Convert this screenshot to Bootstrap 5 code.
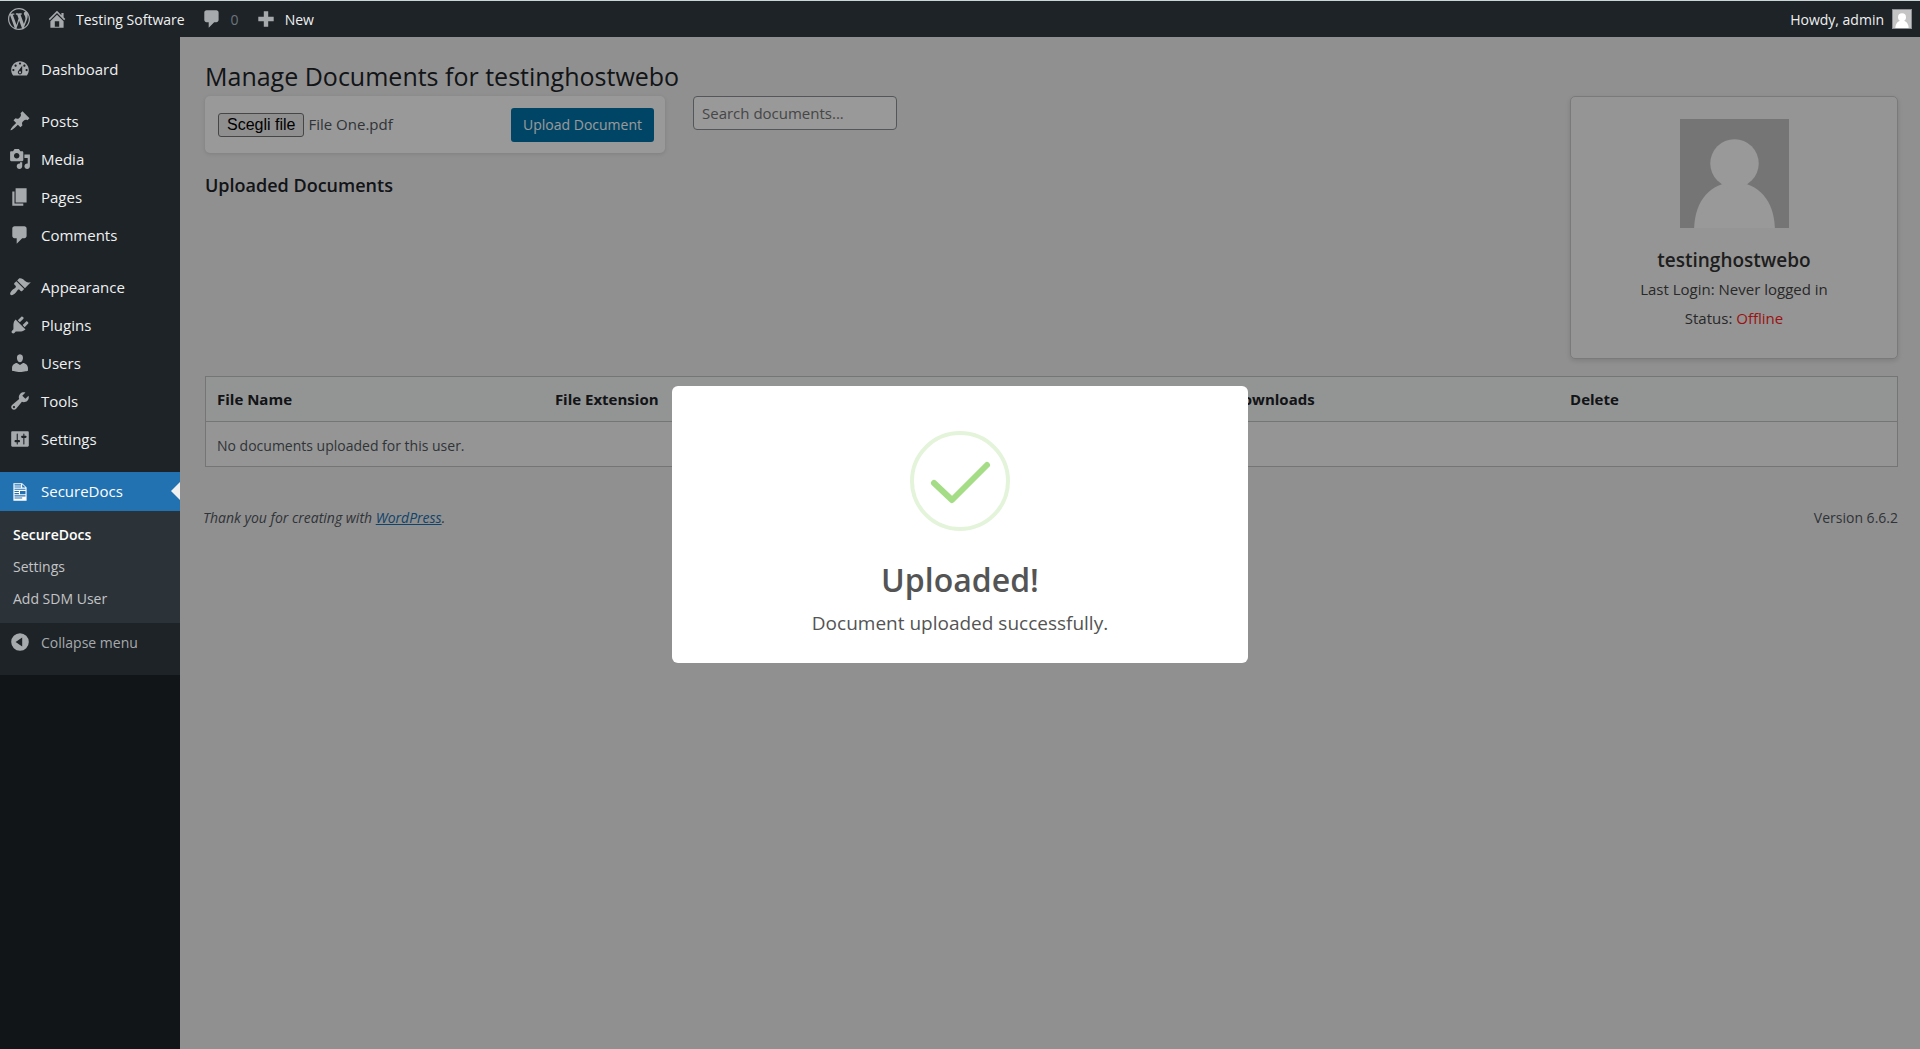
<!DOCTYPE html>
<html lang="en">
<head>
<meta charset="utf-8">
<meta name="viewport" content="width=device-width, initial-scale=1">
<title>SecureDocs</title>
<link href="https://cdn.jsdelivr.net/npm/bootstrap@5.3.0/dist/css/bootstrap.min.css" rel="stylesheet">
<style>
  body { font-family: "Open Sans", "Noto Sans", sans-serif; font-size: 14px; background: #f0f0f1; color: #50575e; }
  a { text-decoration: none; }
  .ico { width: 22px; height: 22px; fill: currentColor; flex: none; }
  .adminbar { position: relative; z-index: 30; height: 37px; background: #1d2327; border-top: 1px solid #c9d6d5; color: #a7aaad; padding: 0 8px; }
  .adminbar a { color: #f0f0f1; }
  .adminbar .ico { color: #a7aaad; }
  .face-sm { width: 20px; height: 20px; border: 1px solid #8c8f94; }
  .side { width: 180px; background: #1d2327; flex: none; }
  .side-menu { position: relative; z-index: 30; background: #1d2327; padding: 13px 0 14px; }
  .side-menu a, .side-menu button { height: 38px; padding: 0 9px; gap: 10px; color: #f0f0f1; font-size: 15px; display: flex; align-items: center; width: 100%; border: 0; background: none; }
  .side-menu .ico { color: #a7aaad; }
  .side-menu .gap-top { margin-top: 14px; }
  .side-menu a.current { position: relative; height: 39px; background: #2271b1; color: #fff; }
  .side-menu a.current .ico { color: #fff; }
  .side-menu a.current::after { content: ""; position: absolute; right: 0; top: 10px; border: 9px solid transparent; border-left: 0; border-right-color: #f0f0f1; }
  .side-menu .submenu { background: #2c3338; padding: 7px 0 9px; }
  .side-menu .submenu a { height: 32px; padding: 0 13px; font-size: 14px; color: #c3c4c7; }
  .side-menu .submenu a.chosen { color: #fff; font-weight: 600; }
  .side-menu button { color: #a7aaad; font-size: 14px; }
  .work { padding: 22px 22px 0 25px; min-width: 0; }
  h1 { font-size: 25px; line-height: 34px; color: #1d2327; margin: 0 0 3px; }
  h2 { font-size: 18px; line-height: 24px; color: #1d2327; margin: 20px 0 0; font-weight: 600; }
  .form-col { width: 460px; margin-right: 28px; }
  .upload-box { height: 57px; padding: 0 11px 0 13px; background: #fff; border-radius: 5px; box-shadow: 0 1px 4px rgba(0,0,0,.12); font-size: 15px; }
  .pick { font: 16px/22px "Liberation Sans", sans-serif; border: 1px solid #767676; border-radius: 3px; background: #efefef; color: #000; padding: 0 8px; }
  .send { background: #0073aa; color: #fff; border: 0; border-radius: 3px; font-size: 14px; height: 34px; padding: 0 12px; }
  .find { width: 204px; height: 34px; border: 1px solid #8c8f94; border-radius: 4px; font-size: 15px; padding: 0 8px; background: #fff; }
  .find::placeholder { color: #757575; opacity: 1; }
  .profile { width: 328px; height: 263px; padding-top: 22px; background: #f9f9f9; border: 1px solid #ccc; border-radius: 5px; box-shadow: 0 2px 5px rgba(0,0,0,.12); color: #444; font-size: 15px; line-height: 29px; }
  .face-lg { width: 109px; height: 109px; display: block; margin: 0 auto 17px; }
  .profile h3 { font-size: 19px; line-height: 30px; margin: 0; font-weight: 600; color: #333; }
  .off { color: #f22; }
  .docs { table-layout: fixed; margin: 17px 0 0; border: 1px solid #c3c4c7; }
  .docs th, .docs td { height: 45px; padding: 0 11px; vertical-align: middle; background: #f6f7f7; border-color: #c3c4c7; }
  .docs th { font-size: 15px; color: #1d2327; font-weight: 700; }
  .docs td { background: #f9f9f9; font-size: 14px; color: #50575e; padding-top: 2px; }
  .foot { margin-top: 40px; line-height: 22px; font-size: 14px; margin-left: -2px; }
  .foot a { color: #2271b1; text-decoration: underline; }
  .shade { position: fixed; inset: 0; z-index: 20; background: rgba(0,0,0,.4); }
  .popup { width: 576px; padding: 45px 0 24px; background: #fff; border-radius: 6px; color: #545454; }
  .tick { width: 100px; height: 100px; }
  .popup h2 { font-size: 32px; line-height: 44px; margin: 27px 0 5px; color: #545454; }
  .popup p { font-size: 19px; line-height: 32px; margin: 0; }
</style>
</head>
<body>
<svg class="d-none">
  <symbol id="face" viewBox="0 0 108 108"><path fill="#c4c4c4" d="M0 0h108v108H0z"/><circle cx="54" cy="44" r="24" fill="#fff"/><path fill="#fff" d="M14 108c1-27 16-45 40-45s39 18 40 45z"/></symbol>
  <symbol id="bubble" viewBox="0 0 20 20"><path d="M5 2h9c1.100 0 2 .9 2 2v7c0 1.100-.9 2-2 2h-2l-5 5v-5H5c-1.100 0-2-.9-2-2V4c0-1.100.9-2 2-2z"/></symbol>
</svg>
<div class="d-flex flex-column min-vh-100">
  <header class="adminbar d-flex align-items-center">
    <a href="#" aria-label="About WordPress" class="d-flex me-3"><svg class="ico" viewBox="0 0 20 20"><path d="M20 10c0-5.510-4.490-10-10-10C4.480 0 0 4.490 0 10c0 5.520 4.480 10 10 10 5.510 0 10-4.480 10-10zM7.780 15.370L4.370 6.220c.55-.02 1.170-.08 1.170-.08.5-.06.44-1.130-.06-1.110 0 0-1.450.11-2.370.11-.18 0-.37 0-.58-.01C4.120 2.690 6.870 1.110 10 1.110c2.330 0 4.450.87 6.050 2.340-.68-.11-1.650.39-1.650 1.580 0 .74.45 1.360.9 2.100.35.61.55 1.360.55 2.460 0 1.490-1.400 5-1.400 5l-3.030-8.370c.54-.02.82-.17.82-.17.5-.05.44-1.250-.06-1.220 0 0-1.440.12-2.380.12-.87 0-2.330-.12-2.330-.12-.5-.03-.56 1.200-.06 1.220l.92.08 1.260 3.410zM17.410 10c.24-.64.74-1.870.43-4.250.7 1.290 1.050 2.710 1.050 4.250 0 3.290-1.730 6.240-4.400 7.780.97-2.590 1.940-5.200 2.920-7.780zM6.100 18.090C3.120 16.650 1.110 13.530 1.110 10c0-1.300.23-2.480.72-3.590C3.250 10.300 4.670 14.200 6.100 18.090zm4.030-6.630l2.580 6.980c-.86.29-1.760.45-2.710.45-.79 0-1.570-.11-2.290-.33.81-2.380 1.620-4.740 2.420-7.100z"/></svg></a>
    <a href="#" class="d-flex align-items-center gap-2 me-3"><svg class="ico" viewBox="0 0 20 20"><path fill-rule="evenodd" d="M16 8.500l1.530 1.530-1.060 1.060L10 4.600l-6.470 6.490-1.060-1.060L10 2.500l4 4v-2h2v4zm-6-2.460l6 5.990V18H4v-5.970zM12 17v-5H8v5h4z"/></svg>Testing Software</a>
    <a href="#" class="d-flex align-items-center gap-2 me-3"><svg class="ico"><use href="#bubble"/></svg><span class="text-secondary">0</span></a>
    <a href="#" class="d-flex align-items-center gap-2"><svg class="ico" viewBox="0 0 20 20"><path d="M8 3h4v5h5v4h-5v5H8v-5H3V8h5z"/></svg>New</a>
    <a href="#" class="d-flex align-items-center gap-2 ms-auto">Howdy, admin<svg class="face-sm"><use href="#face"/></svg></a>
  </header>
  <div class="d-flex flex-grow-1">
    <aside class="side">
      <nav class="side-menu">
        <a href="#"><svg class="ico" viewBox="0 0 20 20"><path d="M3.760 16h12.480c1.100-1.370 1.760-3.110 1.760-5 0-4.420-3.580-8-8-8s-8 3.580-8 8c0 1.890.66 3.630 1.760 5zM10 4c.55 0 1 .45 1 1s-.45 1-1 1-1-.45-1-1 .45-1 1-1zM6 6c.55 0 1 .45 1 1s-.45 1-1 1-1-.45-1-1 .45-1 1-1zm8 0c.55 0 1 .45 1 1s-.45 1-1 1-1-.45-1-1 .45-1 1-1zm-5.370 5.550L12 7v6c0 1.100-.9 2-2 2s-2-.9-2-2c0-.57.24-1.080.63-1.450zM4 10c.55 0 1 .45 1 1s-.45 1-1 1-1-.45-1-1 .45-1 1-1zm12 0c.55 0 1 .45 1 1s-.45 1-1 1-1-.45-1-1 .45-1 1-1zm-5 3c0-.55-.45-1-1-1s-1 .45-1 1 .45 1 1 1 1-.45 1-1z"/></svg>Dashboard</a>
        <a href="#" class="gap-top"><svg class="ico" viewBox="0 0 20 20"><path d="M10.440 3.020l1.820-1.820 6.360 6.350-1.830 1.820c-1.050-.68-2.480-.57-3.410.36l-.75.75c-.92.93-1.040 2.350-.35 3.410l-1.830 1.820-2.410-2.410-2.800 2.790c-.42.42-3.380 2.710-3.800 2.290s1.860-3.390 2.280-3.810l2.790-2.790L4.100 9.360l1.830-1.820c1.050.69 2.480.57 3.400-.36l.75-.75c.93-.92 1.050-2.350.36-3.410z"/></svg>Posts</a>
        <a href="#"><svg class="ico" viewBox="0 0 20 20"><path d="M13 11V4c0-.55-.45-1-1-1h-1.670L9 1H5L3.670 3H2c-.55 0-1 .45-1 1v7c0 .55.45 1 1 1h10c.55 0 1-.45 1-1zM7 4.500c1.380 0 2.500 1.120 2.500 2.500S8.380 9.500 7 9.500 4.500 8.380 4.500 7 5.620 4.500 7 4.500zM14 6h5v10.500c0 1.380-1.120 2.500-2.500 2.500S14 17.880 14 16.500s1.120-2.500 2.500-2.500c.17 0 .34.02.5.05V9h-3V6zm-4 8.050V13h2v3.500c0 1.380-1.120 2.500-2.500 2.500S7 17.880 7 16.500 8.120 14 9.500 14c.17 0 .34.02.5.05z"/></svg>Media</a>
        <a href="#"><svg class="ico" viewBox="0 0 20 20"><path d="M6 15V2h10v13H6zm-1 1h8v2H3V5h2v11z"/></svg>Pages</a>
        <a href="#"><svg class="ico"><use href="#bubble"/></svg>Comments</a>
        <a href="#" class="gap-top"><svg class="ico" viewBox="0 0 20 20"><path d="M14.480 11.060L7.410 3.990l1.500-1.500c.5-.56 2.300-.47 3.510.32 1.210.8 1.430 1.280 2.910 2.100 1.180.64 2.450 1.260 4.450.85zm-.71.71L6.700 4.700 4.930 6.470c-.39.39-.39 1.020 0 1.410l1.060 1.060c.39.39.39 1.030 0 1.420-.6.6-1.430 1.110-2.210 1.690-.35.26-.7.53-1.010.84C1.430 14.230.4 16.080 1.400 17.070c.99 1 2.840-.03 4.180-1.360.31-.31.58-.66.85-1.020.57-.78 1.080-1.610 1.690-2.210.39-.39 1.020-.39 1.410 0l1.060 1.060c.39.39 1.020.39 1.410 0z"/></svg>Appearance</a>
        <a href="#"><svg class="ico" viewBox="0 0 20 20"><path d="M13.110 4.360L9.870 7.600 8 5.730l3.240-3.240c.35-.34 1.050-.2 1.560.32.52.51.66 1.210.31 1.550zm-8 1.770l.91-1.120 9.010 9.010-1.190.84c-.71.71-2.630 1.160-3.820 1.160H6.140L4.900 17.260c-.59.59-1.540.59-2.120 0-.59-.58-.59-1.530 0-2.120l1.240-1.240v-3.880c0-1.130.4-3.190 1.090-3.890zm7.260 3.970l3.240-3.240c.34-.35 1.040-.21 1.550.31.52.51.66 1.210.31 1.550l-3.240 3.250z"/></svg>Plugins</a>
        <a href="#"><svg class="ico" viewBox="0 0 20 20"><path d="M10 9.250c-2.270 0-2.730-3.440-2.730-3.440C7 4.020 7.820 2 9.970 2c2.160 0 2.980 2.020 2.710 3.810 0 0-.41 3.440-2.680 3.440zm0 2.570L12.720 10c2.390 0 4.520 2.330 4.520 4.530v2.490s-3.650 1.130-7.240 1.130c-3.650 0-7.240-1.130-7.240-1.130v-2.490c0-2.250 1.940-4.480 4.470-4.480z"/></svg>Users</a>
        <a href="#"><svg class="ico" viewBox="0 0 20 20"><path d="M16.680 9.770c-1.340 1.340-3.300 1.670-4.950.99l-5.410 6.520c-.99.99-2.590.99-3.580 0s-.99-2.590 0-3.570l6.520-5.420c-.68-1.650-.35-3.610.99-4.950 1.280-1.280 3.120-1.620 4.720-1.060l-2.890 2.890 2.820 2.820 2.860-2.870c.53 1.580.18 3.390-1.080 4.650zM3.810 16.210c.4.39 1.040.39 1.430 0 .4-.4.4-1.040 0-1.430-.39-.4-1.030-.4-1.430 0-.39.39-.39 1.030 0 1.430z"/></svg>Tools</a>
        <a href="#"><svg class="ico" viewBox="0 0 20 20"><path d="M18 16V4c0-.55-.45-1-1-1H3c-.55 0-1 .45-1 1v12c0 .55.45 1 1 1h14c.55 0 1-.45 1-1zM8 11h1c.55 0 1 .45 1 1s-.45 1-1 1H8v1.500c0 .28-.22.5-.5.5s-.5-.22-.5-.5V13H6c-.55 0-1-.45-1-1s.45-1 1-1h1V5.500c0-.28.22-.5.5-.5s.5.22.5.5V11zm5-2h-1c-.55 0-1-.45-1-1s.45-1 1-1h1V5.500c0-.28.22-.5.5-.5s.5.22.5.5V7h1c.55 0 1 .45 1 1s-.45 1-1 1h-1v5.500c0 .28-.22.5-.5.5s-.5-.22-.5-.5V9z"/></svg>Settings</a>
        <a href="#" class="gap-top current"><svg class="ico" viewBox="0 0 20 20"><path fill-rule="evenodd" d="M12 2l4 4v12H4V2h8zM5 3v1h6V3H5zm7 3h3l-3-3v3zM5 5v1h6V5H5zm10 3V7H5v1h10zM5 9v1h4V9H5zm10 3V9h-5v3h5zM5 11v1h4v-1H5zm10 3v-1H5v1h10zm-3 2v-1H5v1h7z"/></svg>SecureDocs</a>
        <div class="submenu">
          <a href="#" class="chosen">SecureDocs</a>
          <a href="#">Settings</a>
          <a href="#">Add SDM User</a>
        </div>
        <button type="button"><svg class="ico" viewBox="0 0 20 20"><path fill-rule="evenodd" d="M10 2a8 8 0 1 0 0 16 8 8 0 0 0 0-16zm2 4v8l-6-4z"/></svg>Collapse menu</button>
      </nav>
    </aside>
    <main class="work flex-grow-1">
      <h1 class="fw-normal">Manage Documents for testinghostwebo</h1>
      <div class="d-flex align-items-start">
        <div class="form-col">
          <form class="upload-box d-flex align-items-center">
            <input type="file" id="doc" class="visually-hidden">
            <label for="doc" class="pick me-1">Scegli file</label><span>File One.pdf</span>
            <button type="button" class="send ms-auto">Upload Document</button>
          </form>
          <h2>Uploaded Documents</h2>
        </div>
        <input type="search" class="find" placeholder="Search documents..." aria-label="Search documents">
        <section class="profile ms-auto text-center">
          <svg class="face-lg"><use href="#face"/></svg>
          <h3>testinghostwebo</h3>
          <div>Last Login: Never logged in</div>
          <div>Status: <span class="off">Offline</span></div>
        </section>
      </div>
      <table class="table docs">
        <thead><tr><th>File Name</th><th>File Extension</th><th></th><th>Downloads</th><th>Delete</th></tr></thead>
        <tbody><tr><td colspan="5">No documents uploaded for this user.</td></tr></tbody>
      </table>
      <footer class="foot d-flex justify-content-between"><em>Thank you for creating with <a href="#">WordPress</a>.</em><span>Version 6.6.2</span></footer>
    </main>
  </div>
</div>
<div class="shade d-flex align-items-center justify-content-center">
  <div class="popup text-center" role="dialog" aria-labelledby="done">
    <svg class="tick" viewBox="0 0 100 100" fill="none"><circle cx="50" cy="50" r="48" stroke="#e4f4da" stroke-width="4"/><path d="M24 52l18 17 35-35" stroke="#a5dc86" stroke-width="6" stroke-linecap="round" stroke-linejoin="round"/></svg>
    <h2 id="done">Uploaded!</h2>
    <p>Document uploaded successfully.</p>
  </div>
</div>
<script src="https://cdn.jsdelivr.net/npm/bootstrap@5.3.0/dist/js/bootstrap.bundle.min.js"></script>
</body>
</html>
